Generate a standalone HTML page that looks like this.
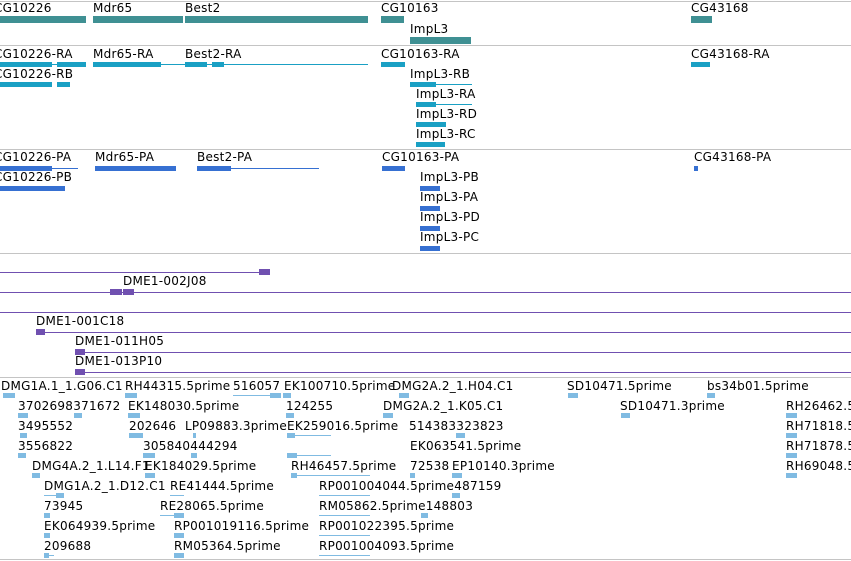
<!DOCTYPE html>
<html><head><meta charset="utf-8"><style>
body{margin:0;width:851px;height:561px;background:#fff;position:relative;overflow:hidden;font-family:"DejaVu Sans","Liberation Sans",sans-serif;font-size:12px;letter-spacing:0.25px;color:#000}
div{position:absolute}
.t{white-space:nowrap;line-height:14px}
.h{left:0;width:851px;height:1px;background:#c4c4c4}
.g{background:#3f9093;height:7px}
.r{background:#1aa0c4;height:5px}
.rl{background:#1aa0c4;height:1px}
.p{background:#3670d2;height:5px}
.pl{background:#3670d2;height:1px}
.v{background:#7050b0;height:1px}
.vb{background:#7050b0;height:6px}
.e{background:#80bbe2;height:5px}
.el{background:#80bbe2;height:1px}
</style></head><body>
<div class="h" style="top:1px"></div>
<div class="h" style="top:45px"></div>
<div class="h" style="top:149px"></div>
<div class="h" style="top:253px"></div>
<div class="h" style="top:377px"></div>
<div class="h" style="top:559px"></div>

<!-- genes -->
<div class="t" style="left:-6px;top:1px">CG10226</div>
<div class="t" style="left:93px;top:1px">Mdr65</div>
<div class="t" style="left:185px;top:1px">Best2</div>
<div class="t" style="left:381px;top:1px">CG10163</div>
<div class="t" style="left:691px;top:1px">CG43168</div>
<div class="t" style="left:410px;top:22px">ImpL3</div>
<div class="g" style="left:0;top:16px;width:86px"></div>
<div class="g" style="left:93px;top:16px;width:90px"></div>
<div class="g" style="left:185px;top:16px;width:183px"></div>
<div class="g" style="left:381px;top:16px;width:23px"></div>
<div class="g" style="left:691px;top:16px;width:21px"></div>
<div class="g" style="left:410px;top:37px;width:61px"></div>

<!-- transcripts -->
<div class="t" style="left:-6px;top:47px">CG10226-RA</div>
<div class="t" style="left:93px;top:47px">Mdr65-RA</div>
<div class="t" style="left:185px;top:47px">Best2-RA</div>
<div class="t" style="left:381px;top:47px">CG10163-RA</div>
<div class="t" style="left:691px;top:47px">CG43168-RA</div>
<div class="t" style="left:-6px;top:67px">CG10226-RB</div>
<div class="t" style="left:410px;top:67px">ImpL3-RB</div>
<div class="t" style="left:416px;top:87px">ImpL3-RA</div>
<div class="t" style="left:416px;top:107px">ImpL3-RD</div>
<div class="t" style="left:416px;top:127px">ImpL3-RC</div>
<div class="rl" style="left:0;top:64px;width:86px"></div>
<div class="r" style="left:0;top:62px;width:52px"></div>
<div class="r" style="left:57px;top:62px;width:29px"></div>
<div class="rl" style="left:93px;top:64px;width:275px"></div>
<div class="r" style="left:93px;top:62px;width:68px"></div>
<div class="r" style="left:185px;top:62px;width:22px"></div>
<div class="r" style="left:212px;top:62px;width:12px"></div>
<div class="r" style="left:381px;top:62px;width:24px"></div>
<div class="r" style="left:691px;top:62px;width:19px"></div>
<div class="r" style="left:0;top:82px;width:52px"></div>
<div class="r" style="left:57px;top:82px;width:13px"></div>
<div class="rl" style="left:410px;top:84px;width:62px"></div>
<div class="r" style="left:410px;top:82px;width:26px"></div>
<div class="rl" style="left:416px;top:104px;width:56px"></div>
<div class="r" style="left:416px;top:102px;width:20px"></div>
<div class="r" style="left:416px;top:122px;width:30px"></div>
<div class="r" style="left:416px;top:142px;width:29px"></div>

<!-- proteins -->
<div class="t" style="left:-6px;top:150px">CG10226-PA</div>
<div class="t" style="left:95px;top:150px">Mdr65-PA</div>
<div class="t" style="left:197px;top:150px">Best2-PA</div>
<div class="t" style="left:382px;top:150px">CG10163-PA</div>
<div class="t" style="left:694px;top:150px">CG43168-PA</div>
<div class="t" style="left:-6px;top:170px">CG10226-PB</div>
<div class="t" style="left:420px;top:170px">ImpL3-PB</div>
<div class="t" style="left:420px;top:190px">ImpL3-PA</div>
<div class="t" style="left:420px;top:210px">ImpL3-PD</div>
<div class="t" style="left:420px;top:230px">ImpL3-PC</div>
<div class="pl" style="left:0;top:168px;width:78px"></div>
<div class="p" style="left:0;top:166px;width:52px"></div>
<div class="p" style="left:95px;top:166px;width:81px"></div>
<div class="pl" style="left:197px;top:168px;width:122px"></div>
<div class="p" style="left:197px;top:166px;width:34px"></div>
<div class="p" style="left:382px;top:166px;width:23px"></div>
<div class="p" style="left:694px;top:166px;width:4px"></div>
<div class="p" style="left:0;top:186px;width:65px"></div>
<div class="p" style="left:420px;top:186px;width:20px"></div>
<div class="p" style="left:420px;top:206px;width:20px"></div>
<div class="p" style="left:420px;top:226px;width:20px"></div>
<div class="p" style="left:420px;top:246px;width:20px"></div>

<!-- purple -->
<div class="v" style="left:0;top:272px;width:262px"></div>
<div class="vb" style="left:259px;top:269px;width:11px"></div>
<div class="t" style="left:123px;top:274px">DME1-002J08</div>
<div class="v" style="left:0;top:292px;width:851px"></div>
<div class="vb" style="left:110px;top:289px;width:12px"></div>
<div class="vb" style="left:123px;top:289px;width:11px"></div>
<div class="v" style="left:0;top:312px;width:851px"></div>
<div class="t" style="left:36px;top:314px">DME1-001C18</div>
<div class="v" style="left:36px;top:332px;width:815px"></div>
<div class="vb" style="left:36px;top:329px;width:9px"></div>
<div class="t" style="left:75px;top:334px">DME1-011H05</div>
<div class="v" style="left:75px;top:352px;width:776px"></div>
<div class="vb" style="left:75px;top:349px;width:10px"></div>
<div class="t" style="left:75px;top:354px">DME1-013P10</div>
<div class="v" style="left:75px;top:372px;width:776px"></div>
<div class="vb" style="left:75px;top:369px;width:10px"></div>

<!-- ESTs -->
<div class="t" style="left:1px;top:379px">DMG1A.1_1.G06.C1</div>
<div class="t" style="left:125px;top:379px">RH44315.5prime</div>
<div class="t" style="left:233px;top:379px">516057</div>
<div class="t" style="left:284px;top:379px">EK100710.5prime</div>
<div class="t" style="left:392px;top:379px">DMG2A.2_1.H04.C1</div>
<div class="t" style="left:567px;top:379px">SD10471.5prime</div>
<div class="t" style="left:707px;top:379px">bs34b01.5prime</div>
<div class="e" style="left:3px;top:393px;width:12px"></div>
<div class="e" style="left:125px;top:393px;width:12px"></div>
<div class="el" style="left:233px;top:395px;width:48px"></div>
<div class="e" style="left:270px;top:393px;width:11px"></div>
<div class="e" style="left:283px;top:393px;width:8px"></div>
<div class="e" style="left:399px;top:393px;width:10px"></div>
<div class="e" style="left:568px;top:393px;width:10px"></div>
<div class="e" style="left:707px;top:393px;width:8px"></div>

<div class="t" style="left:18px;top:399px">3702698371672</div>
<div class="t" style="left:128px;top:399px">EK148030.5prime</div>
<div class="t" style="left:286px;top:399px">124255</div>
<div class="t" style="left:383px;top:399px">DMG2A.2_1.K05.C1</div>
<div class="t" style="left:620px;top:399px">SD10471.3prime</div>
<div class="t" style="left:786px;top:399px">RH26462.5prime</div>
<div class="e" style="left:18px;top:413px;width:10px"></div>
<div class="e" style="left:74px;top:413px;width:8px"></div>
<div class="e" style="left:128px;top:413px;width:12px"></div>
<div class="e" style="left:286px;top:413px;width:8px"></div>
<div class="e" style="left:383px;top:413px;width:10px"></div>
<div class="e" style="left:621px;top:413px;width:9px"></div>
<div class="e" style="left:786px;top:413px;width:11px"></div>

<div class="t" style="left:18px;top:419px">3495552</div>
<div class="t" style="left:129px;top:419px">202646</div>
<div class="t" style="left:185px;top:419px">LP09883.3prime</div>
<div class="t" style="left:287px;top:419px">EK259016.5prime</div>
<div class="t" style="left:409px;top:419px">514383323823</div>
<div class="t" style="left:786px;top:419px">RH71818.5prime</div>
<div class="e" style="left:20px;top:433px;width:7px"></div>
<div class="e" style="left:129px;top:433px;width:14px"></div>
<div class="e" style="left:193px;top:433px;width:3px"></div>
<div class="el" style="left:287px;top:435px;width:44px"></div>
<div class="e" style="left:287px;top:433px;width:8px"></div>
<div class="e" style="left:456px;top:433px;width:9px"></div>
<div class="e" style="left:786px;top:433px;width:11px"></div>

<div class="t" style="left:18px;top:439px">3556822</div>
<div class="t" style="left:143px;top:439px">305840444294</div>
<div class="t" style="left:410px;top:439px">EK063541.5prime</div>
<div class="t" style="left:786px;top:439px">RH71878.5prime</div>
<div class="e" style="left:18px;top:453px;width:8px"></div>
<div class="e" style="left:143px;top:453px;width:12px"></div>
<div class="e" style="left:191px;top:453px;width:6px"></div>
<div class="el" style="left:287px;top:455px;width:44px"></div>
<div class="e" style="left:287px;top:453px;width:10px"></div>
<div class="e" style="left:786px;top:453px;width:11px"></div>

<div class="t" style="left:32px;top:459px">DMG4A.2_1.L14.F1</div>
<div class="t" style="left:145px;top:459px">EK184029.5prime</div>
<div class="t" style="left:291px;top:459px">RH46457.5prime</div>
<div class="t" style="left:410px;top:459px">72538</div>
<div class="t" style="left:452px;top:459px">EP10140.3prime</div>
<div class="t" style="left:786px;top:459px">RH69048.5prime</div>
<div class="e" style="left:32px;top:473px;width:8px"></div>
<div class="e" style="left:145px;top:473px;width:10px"></div>
<div class="el" style="left:291px;top:475px;width:79px"></div>
<div class="e" style="left:291px;top:473px;width:6px"></div>
<div class="e" style="left:410px;top:473px;width:5px"></div>
<div class="e" style="left:452px;top:473px;width:10px"></div>
<div class="e" style="left:786px;top:473px;width:11px"></div>

<div class="t" style="left:44px;top:479px">DMG1A.2_1.D12.C1</div>
<div class="t" style="left:170px;top:479px">RE41444.5prime</div>
<div class="t" style="left:319px;top:479px">RP001004044.5prime487159</div>
<div class="el" style="left:44px;top:495px;width:20px"></div>
<div class="e" style="left:56px;top:493px;width:8px"></div>
<div class="el" style="left:170px;top:495px;width:14px"></div>
<div class="el" style="left:319px;top:495px;width:51px"></div>
<div class="e" style="left:452px;top:493px;width:8px"></div>

<div class="t" style="left:44px;top:499px">73945</div>
<div class="t" style="left:160px;top:499px">RE28065.5prime</div>
<div class="t" style="left:319px;top:499px">RM05862.5prime148803</div>
<div class="e" style="left:44px;top:513px;width:6px"></div>
<div class="el" style="left:160px;top:515px;width:24px"></div>
<div class="e" style="left:174px;top:513px;width:10px"></div>
<div class="el" style="left:319px;top:515px;width:51px"></div>
<div class="e" style="left:421px;top:513px;width:7px"></div>

<div class="t" style="left:44px;top:519px">EK064939.5prime</div>
<div class="t" style="left:174px;top:519px">RP001019116.5prime</div>
<div class="t" style="left:319px;top:519px">RP001022395.5prime</div>
<div class="e" style="left:44px;top:533px;width:6px"></div>
<div class="e" style="left:174px;top:533px;width:10px"></div>
<div class="el" style="left:319px;top:535px;width:51px"></div>

<div class="t" style="left:44px;top:539px">209688</div>
<div class="t" style="left:174px;top:539px">RM05364.5prime</div>
<div class="t" style="left:319px;top:539px">RP001004093.5prime</div>
<div class="el" style="left:44px;top:555px;width:10px"></div>
<div class="e" style="left:44px;top:553px;width:5px"></div>
<div class="e" style="left:174px;top:553px;width:10px"></div>
<div class="el" style="left:319px;top:555px;width:51px"></div>
</body></html>
